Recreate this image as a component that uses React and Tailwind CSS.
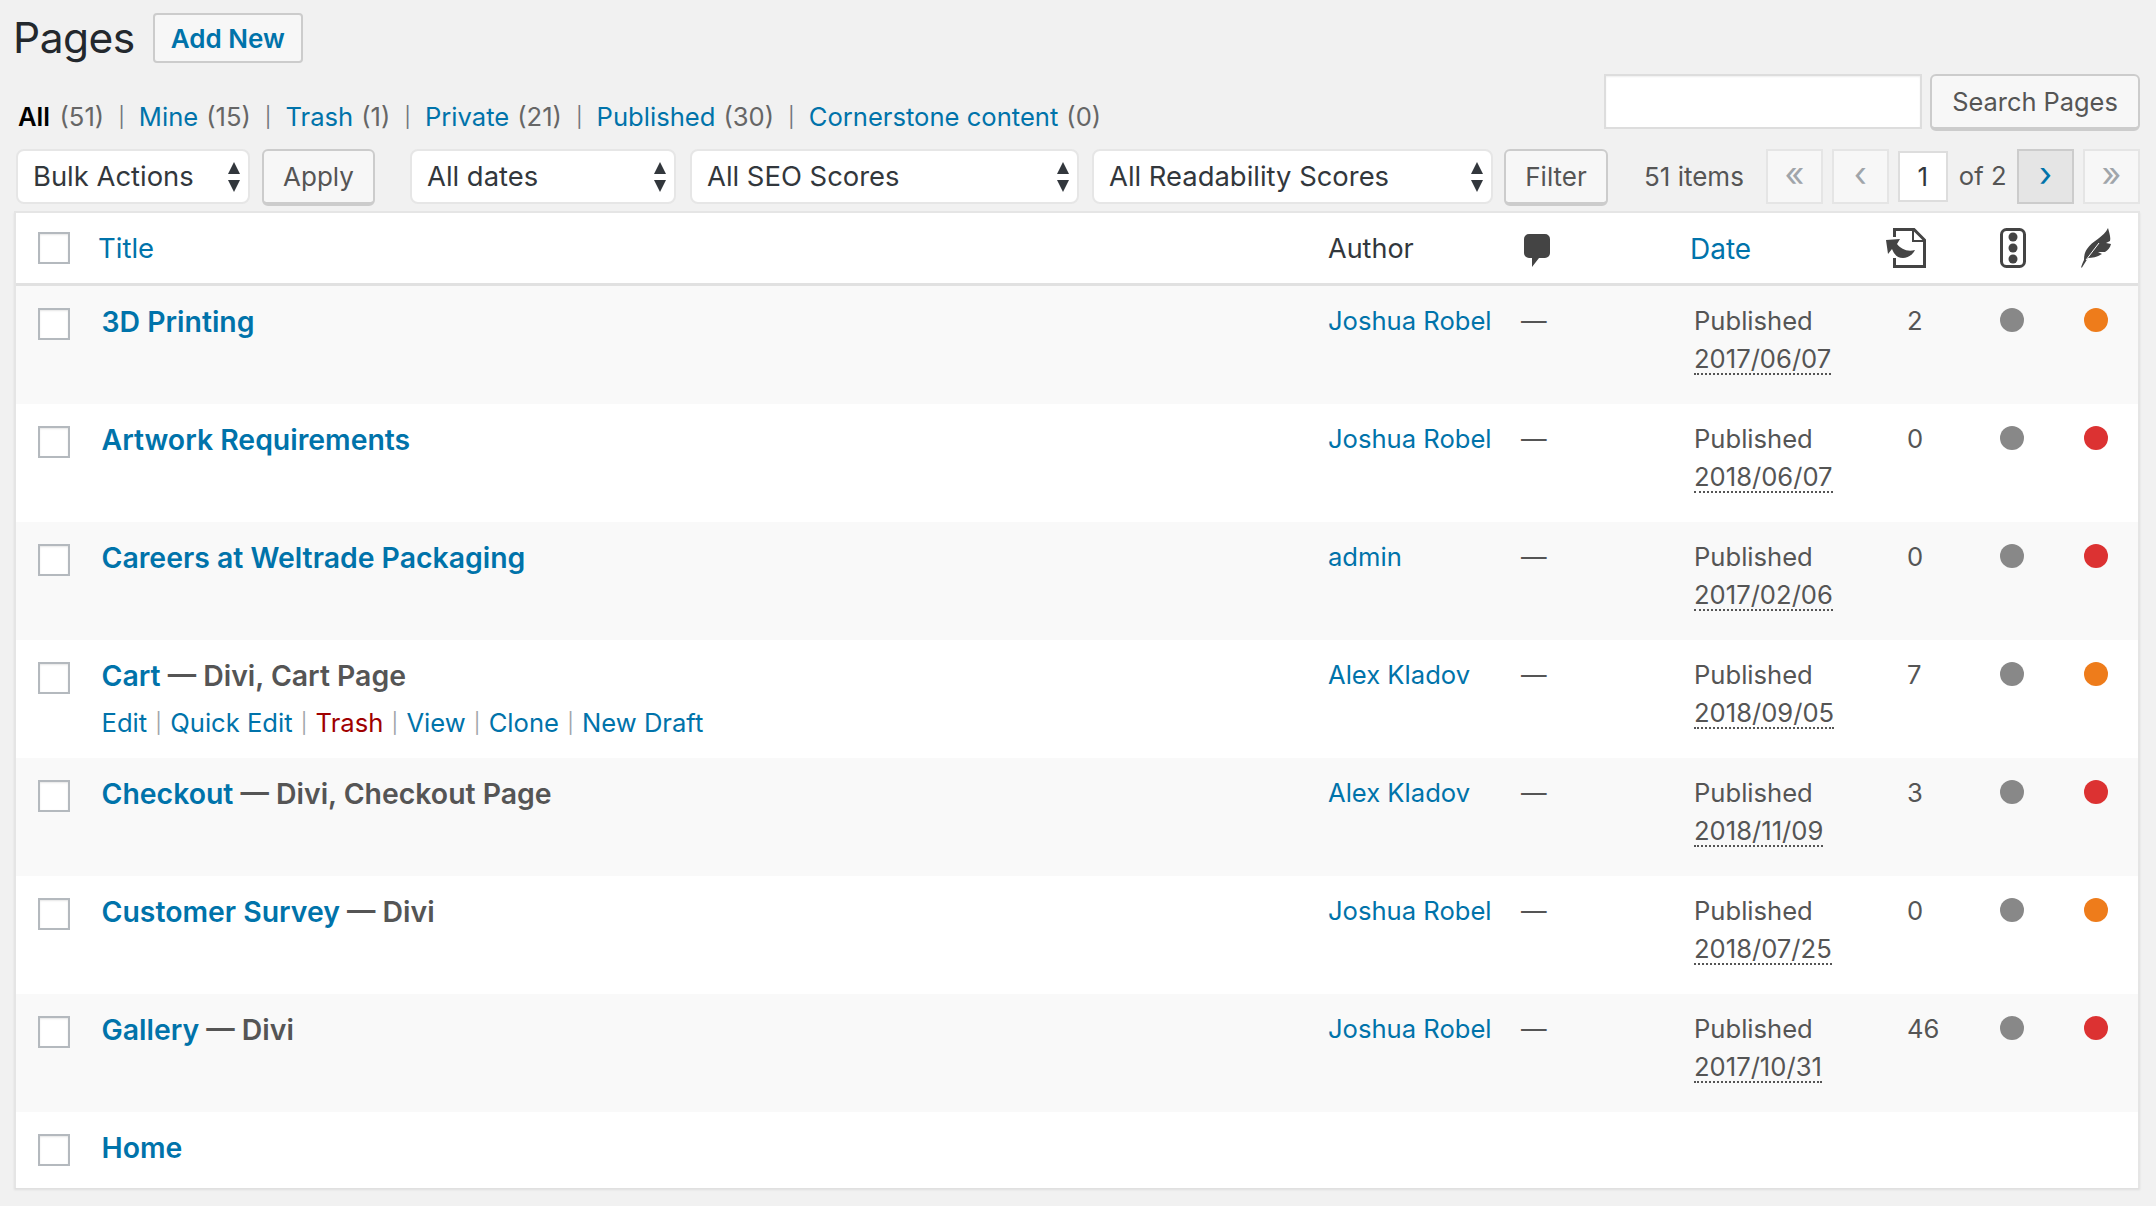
const rows = [
  { name: '3D Printing', author: 'Joshua Robel', date: '2017/06/07', links: '2', score: 'bg-[#ee7c1b]' },
  { name: 'Artwork Requirements', author: 'Joshua Robel', date: '2018/06/07', links: '0', score: 'bg-[#dc3232]' },
  { name: 'Careers at Weltrade Packaging', author: 'admin', date: '2017/02/06', links: '0', score: 'bg-[#dc3232]' },
  { name: 'Cart', state: 'Divi, Cart Page', author: 'Alex Kladov', date: '2018/09/05', links: '7', score: 'bg-[#ee7c1b]', actions: true },
  { name: 'Checkout', state: 'Divi, Checkout Page', author: 'Alex Kladov', date: '2018/11/09', links: '3', score: 'bg-[#dc3232]' },
  { name: 'Customer Survey', state: 'Divi', author: 'Joshua Robel', date: '2018/07/25', links: '0', score: 'bg-[#ee7c1b]' },
  { name: 'Gallery', state: 'Divi', author: 'Joshua Robel', date: '2017/10/31', links: '46', score: 'bg-[#dc3232]' },
];

const views = [
  ['Mine', '(15)'],
  ['Trash', '(1)'],
  ['Private', '(21)'],
  ['Published', '(30)'],
  ['Cornerstone content', '(0)'],
];

const rowActions = ['Edit', 'Quick Edit', 'Trash', 'View', 'Clone', 'New Draft'];

function Checkbox() {
  return <span className="block w-[32px] h-[32px] bg-white border-[2px] border-[#b4b9be] shadow-[inset_0_1px_2px_rgba(0,0,0,0.1)]" />;
}

function Select({ label, width }) {
  return (
    <div className={`${width} h-[55px] shrink-0 flex items-center justify-between pl-[15px] pr-[7px] bg-white border-[2px] border-[#e6e6e6] rounded-[8px] text-[27.4px] text-[#32373c]`}>
      <span className="pt-[1px]">{label}</span>
      <svg width="14" height="34" viewBox="0 0 14 34" fill="#32373c" aria-hidden="true">
        <path d="M7 2 13 14H1z" />
        <path d="M1 20h12L7 32z" />
      </svg>
    </div>
  );
}

function SecondaryButton({ label, width }) {
  return (
    <div className={`${width} h-[57px] shrink-0 flex items-center justify-center bg-[#f7f7f7] border-[2px] border-[#cccccc] border-b-[4px] rounded-[6px] text-[#555555]`}>
      {label}
    </div>
  );
}

function PageButton({ glyph, active }) {
  return (
    <div className={`w-[57px] h-[55px] shrink-0 flex items-center justify-center border-[2px] text-[34px] leading-none pb-[6px] ${active ? 'bg-[#e5e5e5] border-[#cccccc] text-[#0073aa]' : 'bg-[#f7f7f7] border-[#e5e5e5] text-[#a0a5aa]'}`}>
      {glyph}
    </div>
  );
}

function CommentIcon() {
  return (
    <svg width="26" height="33" viewBox="0 0 26 33" fill="#444444" aria-hidden="true">
      <path d="M5 0h16a5 5 0 0 1 5 5v14a5 5 0 0 1-5 5h-6l-7 9v-9H5a5 5 0 0 1-5-5V5a5 5 0 0 1 5-5z" />
    </svg>
  );
}

function LinksIcon() {
  return (
    <svg width="40" height="40" viewBox="0 0 40 40" aria-hidden="true">
      <path d="M8.500 9V1.500H28L38.500 12V38.500H8.500V30" fill="none" stroke="#444444" strokeWidth="3" />
      <path d="M27 2v11h11" fill="none" stroke="#444444" strokeWidth="2" />
      <path d="M0 12L14 11L11 16C15 21 21 24 29 22C26 28 21 30 17 30C11 30 8 26 6 21L2 26z" fill="#444444" />
    </svg>
  );
}

function LightIcon() {
  return (
    <svg width="26" height="40" viewBox="0 0 26 40" aria-hidden="true">
      <rect x="1.500" y="1.500" width="23" height="37" rx="5" fill="none" stroke="#444444" strokeWidth="3" />
      <circle cx="13" cy="9" r="4.500" fill="#444444" />
      <circle cx="13" cy="20" r="4.500" fill="#444444" />
      <circle cx="13" cy="31" r="4.500" fill="#444444" />
    </svg>
  );
}

function FeatherIcon() {
  return (
    <svg width="32" height="40" viewBox="0 0 32 40" fill="#444444" aria-hidden="true">
      <path d="M27 0C28 4 30 9 29 13L25 15L30 16C29 20 27 22 24 24L17 24L21 26C16 29 11 30 7 30L1 39.500L0 39.500C1 36 2 34 3 32C3 27 4 24 6 21C11 13 23 9 27 0z" />
      <path d="M5 32L18 15" stroke="#ffffff" strokeWidth="1" fill="none" />
    </svg>
  );
}

function Row({ row, index }) {
  const { name, state, author, date, links, score, actions } = row;
  return (
    <div className={`h-[118px] grid grid-cols-[87px_1225px_193px_173px_213px_93px_84px_56px] text-[25.6px] leading-[38px] ${index % 2 === 0 ? 'bg-[#f9f9f9]' : 'bg-white'}`}>
      <div className="pl-[22px] pt-[22px]">
        <Checkbox />
      </div>
      <div className="pt-[17px] -ml-[1.5px]">
        <div className="text-[28.4px] leading-[38px] font-semibold text-[#555555]">
          <span className="text-[#0073aa]">{name}</span>
          {state ? ` — ${state}` : ''}
        </div>
        {actions && (
          <div className="mt-[9px] flex items-center text-[25.6px] leading-[38px]">
            {rowActions.map((a, i) => (
              <span key={a} className="flex items-center">
                <span className={a === 'Trash' ? 'text-[#a00000]' : 'text-[#0073aa]'}>{a}</span>
                {i < rowActions.length - 1 && <span className="text-[20px] text-[#a0a5aa] px-[8.2px]">|</span>}
              </span>
            ))}
          </div>
        )}
      </div>
      <div className="pt-[16px] text-[#0073aa]">{author}</div>
      <div className="pt-[16px] text-[#555555]">—</div>
      <div className="pt-[16px] text-[#555555]">
        <div>Published</div>
        <div><span className="border-b-[2px] border-dotted border-[#555555] leading-[28px] inline-block">{date}</span></div>
      </div>
      <div className="pt-[16px] text-[#555555]">{links}</div>
      <div className="pt-[22px]"><span className="block w-[24px] h-[24px] rounded-full bg-[#888888]" /></div>
      <div className="pt-[22px]"><span className={`block w-[24px] h-[24px] rounded-full ${score}`} /></div>
    </div>
  );
}

export default function App() {
  return (
    <div className="w-[2156px] h-[1206px] overflow-hidden bg-[#f1f1f1] font-['Inter','Liberation_Sans',sans-serif] text-[#444444]">
      <div className="pl-[13px] pt-[13px] h-[63px] flex items-center">
        <h1 className="text-[42.5px] leading-[50px] font-normal text-[#23282d] tracking-[-0.5px]">Pages</h1>
        <div className="ml-[18px] w-[150px] h-[50px] flex items-center justify-center bg-[#f7f7f7] border-[2px] border-[#cccccc] rounded-[4px] text-[26px] font-semibold text-[#0073aa]">
          Add New
        </div>
      </div>

      <div className="mt-[11px] h-[57px] pl-[18px] pr-[16px] flex items-start justify-between">
        <div className="flex items-center text-[25.6px] leading-[38px] text-[#666666] pt-[24px]">
          <span className="font-semibold text-black">All</span>
          <span className="ml-[9.5px]">(51)</span>
          {views.map(([label, count]) => (
            <span key={label} className="flex items-center">
              <span className="text-[20px] text-[#72777c] px-[14px]">|</span>
              <span className="text-[#0073aa]">{label}</span>
              <span className="ml-[8px]">{count}</span>
            </span>
          ))}
        </div>
        <div className="flex gap-[8px]">
          <div className="w-[318px] h-[55px] bg-white border-[2px] border-[#dddddd] shadow-[inset_0_1px_2px_rgba(0,0,0,0.07)]" />
          <SecondaryButton label={<span className="text-[25.4px] pt-[2px]">Search Pages</span>} width="w-[210px]" />
        </div>
      </div>

      <div className="mt-[18px] h-[57px] pl-[16px] pr-[16px] flex items-start">
        <Select label="Bulk Actions" width="w-[234px]" />
        <div className="ml-[12px]"><SecondaryButton label={<span className="text-[26px]">Apply</span>} width="w-[113px]" /></div>
        <div className="ml-[35px]"><Select label="All dates" width="w-[266px]" /></div>
        <div className="ml-[14px]"><Select label="All SEO Scores" width="w-[389px]" /></div>
        <div className="ml-[13px]"><Select label="All Readability Scores" width="w-[401px]" /></div>
        <div className="ml-[11px]"><SecondaryButton label={<span className="text-[26px]">Filter</span>} width="w-[104px]" /></div>
        <div className="ml-auto flex items-center gap-[9px] text-[26px] text-[#555555]">
          <span className="mr-[13px]">51 items</span>
          <PageButton glyph="«" />
          <PageButton glyph="‹" />
          <div className="w-[50px] h-[51px] flex items-center justify-center bg-white border-[2px] border-[#dddddd] text-[#32373c]">1</div>
          <span className="ml-[2px] mr-[1.5px] text-[25.6px] whitespace-nowrap">of 2</span>
          <PageButton glyph="›" active />
          <PageButton glyph="»" />
        </div>
      </div>

      <div className="mt-[5px] ml-[14px] w-[2126px] border-[2px] border-[#e5e5e5] border-b-0 shadow-[0_2px_2px_rgba(0,0,0,0.08)]">
        <div className="h-[73px] grid grid-cols-[82px_1230px_193px_169px_196px_114px_81px_39px] items-center bg-white border-b-[3px] border-[#e1e1e1] text-[27px]">
          <div className="pl-[22px]"><Checkbox /></div>
          <div className="text-[#0073aa] text-[27.5px] pt-[2px]">Title</div>
          <div className="text-[#32373c] pt-[2px]">Author</div>
          <div className="pl-[3px] pt-[4px]"><CommentIcon /></div>
          <div className="text-[#0073aa] text-[28px] pt-[1px]">Date</div>
          <div className="pb-[1px]"><LinksIcon /></div>
          <div className="pb-[1px]"><LightIcon /></div>
          <div className="pb-[1px]"><FeatherIcon /></div>
        </div>
        {rows.map((row, i) => (
          <Row key={row.name} row={row} index={i} />
        ))}
        <div className="h-[76px] grid grid-cols-[87px_1fr] bg-white">
          <div className="pl-[22px] pt-[22px]"><Checkbox /></div>
          <div className="pt-[17px] -ml-[1.5px] text-[28.4px] leading-[38px] font-semibold text-[#0073aa]">Home</div>
        </div>
      </div>
    </div>
  );
}
